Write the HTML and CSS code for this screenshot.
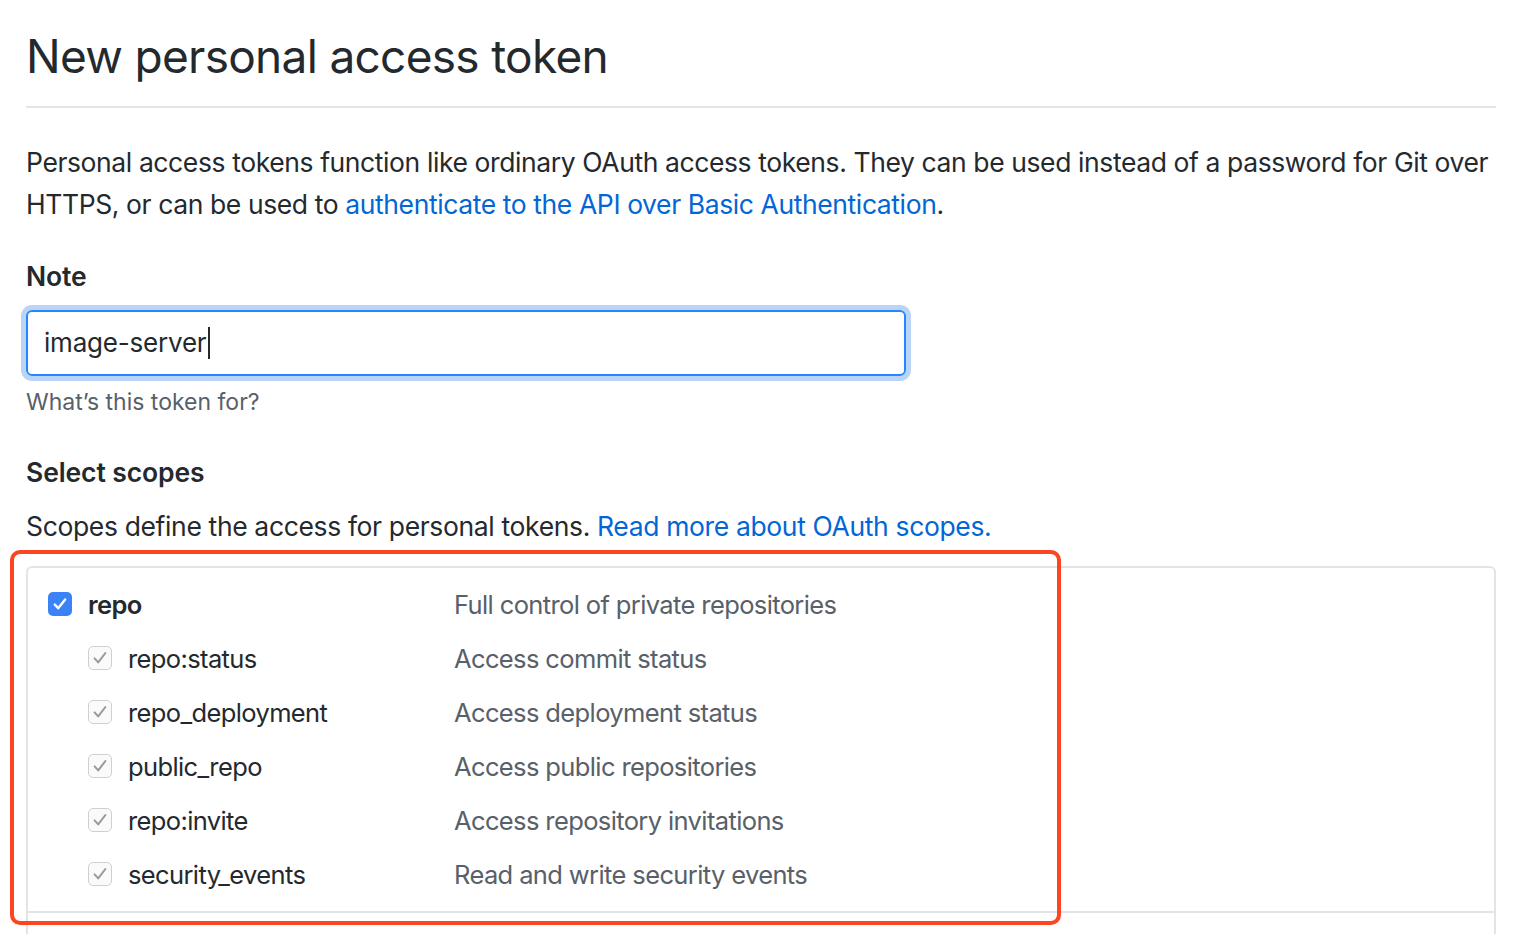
FILE: index.html
```html
<!DOCTYPE html>
<html>
<head>
<meta charset="utf-8">
<link rel="stylesheet" href="styles.css">
</head>
<body>
<div class="page">
  <h1 class="title">New personal access token</h1>
  <p class="intro">Personal access tokens function like ordinary OAuth access tokens. They can be used instead of a password for Git over HTTPS, or can be used to <a href="#">authenticate to the API over Basic Authentication</a>.</p>

  <div class="field">
    <label class="label">Note</label>
    <div class="input-wrap"><div class="input">image-server<span class="caret"></span></div></div>
    <p class="hint">What’s this token for?</p>
  </div>

  <h2 class="label scopes-title">Select scopes</h2>
  <p class="scopes-desc">Scopes define the access for personal tokens. <a href="#">Read more about OAuth scopes.</a></p>

  <div class="scopes">
    <div class="group">
      <div class="row parent">
        <div class="name"><span class="cb cb-on"><svg viewBox="0 0 24 24" width="24" height="24"><path d="M6.8 12.6l3.4 3.7 7-8.8" fill="none" stroke="#fff" stroke-width="2.4" stroke-linecap="round" stroke-linejoin="round"/></svg></span><span class="bold">repo</span></div>
        <div class="desc">Full control of private repositories</div>
      </div>
      <div class="row child">
        <div class="name"><span class="cb cb-dis"><svg viewBox="0 0 24 24" width="24" height="24"><path d="M6.6 12.4l3.6 4 7.2-9.4" fill="none" stroke="#999" stroke-width="2" stroke-linecap="round" stroke-linejoin="round"/></svg></span>repo:status</div>
        <div class="desc">Access commit status</div>
      </div>
      <div class="row child">
        <div class="name"><span class="cb cb-dis"><svg viewBox="0 0 24 24" width="24" height="24"><path d="M6.6 12.4l3.6 4 7.2-9.4" fill="none" stroke="#999" stroke-width="2" stroke-linecap="round" stroke-linejoin="round"/></svg></span>repo_deployment</div>
        <div class="desc">Access deployment status</div>
      </div>
      <div class="row child">
        <div class="name"><span class="cb cb-dis"><svg viewBox="0 0 24 24" width="24" height="24"><path d="M6.6 12.4l3.6 4 7.2-9.4" fill="none" stroke="#999" stroke-width="2" stroke-linecap="round" stroke-linejoin="round"/></svg></span>public_repo</div>
        <div class="desc">Access public repositories</div>
      </div>
      <div class="row child">
        <div class="name"><span class="cb cb-dis"><svg viewBox="0 0 24 24" width="24" height="24"><path d="M6.6 12.4l3.6 4 7.2-9.4" fill="none" stroke="#999" stroke-width="2" stroke-linecap="round" stroke-linejoin="round"/></svg></span>repo:invite</div>
        <div class="desc">Access repository invitations</div>
      </div>
      <div class="row child">
        <div class="name"><span class="cb cb-dis"><svg viewBox="0 0 24 24" width="24" height="24"><path d="M6.6 12.4l3.6 4 7.2-9.4" fill="none" stroke="#999" stroke-width="2" stroke-linecap="round" stroke-linejoin="round"/></svg></span>security_events</div>
        <div class="desc">Read and write security events</div>
      </div>
    </div>
    <div class="group next"></div>
  </div>

  <div class="highlight"></div>
</div>
</body>
</html>
```

FILE: styles.css
```css
html, body {
  margin: 0;
  padding: 0;
  background: #fff;
  overflow: hidden;
}
body {
  font-family: Inter, "Liberation Sans", sans-serif;
  color: #24292e;
  height: 934px;
}
.page {
  position: relative;
  padding: 0 26px 0 26px;
  width: 1470px;
}
a {
  color: #0366d6;
  text-decoration: none;
}
.title {
  font-size: 46px;
  font-weight: 400;
  margin: 0;
  padding-top: 26px;
  padding-bottom: 20px;
  line-height: 60px;
  letter-spacing: -0.7px;
  border-bottom: 2px solid #e1e4e8;
}
.intro {
  font-size: 26.5px;
  letter-spacing: -0.4px;
  line-height: 42px;
  margin: 33px 0 0 0;
}
.field {
  margin-top: 31px;
}
.label {
  display: block;
  font-size: 26.5px;
  letter-spacing: -0.1px;
  font-weight: 600;
  line-height: 40px;
  margin: 0;
}
.input-wrap {
  margin-top: 14px;
  width: 880px;
}
.input {
  box-sizing: border-box;
  width: 880px;
  height: 66px;
  border: 2px solid #2188ff;
  border-radius: 6px;
  box-shadow: 0 0 0 5px rgba(3, 102, 214, 0.28);
  padding: 0 16px;
  font-size: 26px;
  letter-spacing: -0.2px;
  line-height: 62px;
  display: flex;
  align-items: center;
}
.caret {
  display: inline-block;
  width: 2px;
  height: 32px;
  background: #24292e;
  margin-left: 2px;
}
.hint {
  margin: 8px 0 0 0;
  font-size: 23px;
  line-height: 36px;
  color: #586069;
}
.scopes-title {
  margin-top: 32px;
}
.scopes-desc {
  font-size: 26.5px;
  letter-spacing: -0.36px;
  line-height: 42px;
  margin: 13px 0 0 0;
}
.scopes {
  margin-top: 19px;
  border: 2px solid #e1e4e8;
  border-radius: 6px;
  height: 400px;
}
.group {
  padding: 9px 0 10px 20px;
  border-bottom: 2px solid #e1e4e8;
}
.group.next {
  border-bottom: 0;
}
.row {
  display: flex;
  align-items: center;
  height: 54px;
  font-size: 25.5px;
  letter-spacing: -0.62px;
}
.name {
  width: 406px;
  display: flex;
  align-items: center;
  gap: 16px;
}
.child .name {
  padding-left: 40px;
  width: 366px;
}
.bold {
  font-weight: 600;
}
.desc {
  color: #586069;
}
.cb {
  box-sizing: border-box;
  width: 24px;
  height: 24px;
  border-radius: 5px;
  display: inline-flex;
  flex: none;
}
.cb-on {
  background: #3b82f6;
}
.cb-dis {
  background: #fafafa;
  border: 1px solid #d0d0d0;
}
.cb-dis svg {
  margin: -1px;
}
.highlight {
  position: absolute;
  left: 10px;
  top: 550px;
  width: 1051px;
  height: 375px;
  box-sizing: border-box;
  border: 4px solid #fc4621;
  border-radius: 10px;
  pointer-events: none;
}
```
